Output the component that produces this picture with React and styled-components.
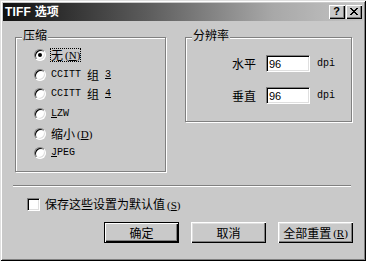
import React from "react";
import styled, { createGlobalStyle } from "styled-components";

const BG = "#c9c9c9";

const Global = createGlobalStyle`
  html, body { margin: 0; padding: 0; background: ${BG}; }
  * { box-sizing: border-box; }
`;

const Window = styled.div`
  width: 366px;
  height: 261px;
  padding: 3px;
  background: ${BG};
  display: flex;
  flex-direction: column;
  font-family: "Noto Sans CJK SC", "Liberation Sans", sans-serif;
  font-size: 12px;
  line-height: 12px;
  color: #000;
  box-shadow: inset 1px 1px 0 #dfdfdf, inset -1px -1px 0 #000,
    inset 2px 2px 0 #fff, inset -2px -2px 0 #808080;
`;

const TitleBar = styled.div`
  height: 18px;
  flex: none;
  display: flex;
  align-items: center;
  justify-content: space-between;
  padding: 0 1px 0 2px;
  background: linear-gradient(90deg, #101010 0%, #5c5c5c 40%, #a8a8a8 75%, #c4c4c4 100%);
`;

const Title = styled.div`
  color: #fff;
  font-weight: bold;
  font-size: 12px;
  line-height: 12px;
  font-family: "Liberation Sans", "Noto Sans CJK SC", sans-serif;
  letter-spacing: 0.2px;
`;

const TitleButtons = styled.div`
  display: flex;
  gap: 1px;
`;

const TitleButton = styled.div`
  width: 16px;
  height: 14px;
  background: ${BG};
  display: flex;
  align-items: center;
  justify-content: center;
  font-family: "Liberation Sans", sans-serif;
  font-weight: bold;
  font-size: 11px;
  line-height: 11px;
  box-shadow: inset 1px 1px 0 #fff, inset -1px -1px 0 #000, inset -2px -2px 0 #808080;
  padding: 0 1px 1px 0;
`;

const Body = styled.div`
  display: flex;
  flex-direction: column;
`;

const GroupsRow = styled.div`
  display: flex;
  align-items: flex-start;
  gap: 19px;
  padding-left: 12px;
  margin-top: 16px;
`;

const Group = styled.div`
  position: relative;
  width: ${(p) => p.$w}px;
  height: ${(p) => p.$h}px;
  border: 1px solid #808080;
  box-shadow: inset 1px 1px 0 #fff, 1px 1px 0 #fff;
`;

const Legend = styled.span`
  position: absolute;
  top: -9px;
  left: 6px;
  padding: 0 1px;
  background: ${BG};
  line-height: 12px;
  font-size: 12px;
`;

const RadioList = styled.div`
  display: flex;
  flex-direction: column;
  padding: 7px 0 0 18px;
`;

const RadioRow = styled.div`
  height: 19.7px;
  display: flex;
  align-items: center;
  gap: 4px;
`;

const RadioDot = styled.span`
  position: relative;
  flex: none;
  width: 12px;
  height: 12px;
  border-radius: 50%;
  background: #fff;
  border: 1px solid;
  border-color: #808080 #fff #fff #808080;
  box-shadow: inset 1px 1px 0 #000, inset -1px -1px 0 #dfdfdf;
  &::after {
    content: "";
    display: ${(p) => (p.$checked ? "block" : "none")};
    position: absolute;
    left: 3px;
    top: 3px;
    width: 4px;
    height: 4px;
    border-radius: 50%;
    background: #000;
  }
`;

const OptionText = styled.span`
  display: inline-flex;
  align-items: center;
  line-height: 12px;
  padding: 1px 1px;
  outline: ${(p) => (p.$focus ? "1px dotted #000" : "none")};
  outline-offset: -1px;
  white-space: pre;
`;

const Mono = styled.span`
  font-family: "Liberation Mono", monospace;
  font-size: 10px;
  line-height: 12px;
  white-space: pre;
`;

const Acc = styled.span`
  font-family: "Liberation Serif", serif;
  font-size: 11px;
  line-height: 12px;
  white-space: pre;
  margin-left: 2px;
`;

const ResGrid = styled.div`
  display: grid;
  grid-template-columns: 24px 44px auto;
  column-gap: 10px;
  row-gap: 15px;
  align-items: center;
  padding: 17px 0 0 46px;
`;

const Unit = styled(Mono)`
  margin-left: -3px;
`;

const NumInput = styled.input`
  width: 44px;
  height: 17px;
  margin: 0;
  padding: 0 2px;
  background: #fff;
  font-family: "Liberation Sans", sans-serif;
  font-size: 11px;
  color: #000;
  border: 1px solid;
  border-color: #808080 #fff #fff #808080;
  box-shadow: inset 1px 1px 0 #000, inset -1px -1px 0 #dfdfdf;
  outline: none;
`;

const Separator = styled.div`
  margin: 13px 12px 0 10px;
  height: 2px;
  border-top: 1px solid #808080;
  border-bottom: 1px solid #fff;
`;

const CheckRow = styled.div`
  display: flex;
  align-items: center;
  gap: 5px;
  margin-top: 11px;
  padding-left: 24px;
  height: 13px;
`;

const CheckBox = styled.span`
  width: 13px;
  height: 13px;
  flex: none;
  background: #fff;
  border: 1px solid;
  border-color: #808080 #fff #fff #808080;
  box-shadow: inset 1px 1px 0 #000, inset -1px -1px 0 #dfdfdf;
`;

const ButtonRow = styled.div`
  display: flex;
  justify-content: flex-end;
  gap: 12px;
  margin-top: 11px;
  padding-right: 10px;
`;

const Button = styled.div`
  width: 75px;
  height: 21px;
  display: flex;
  align-items: center;
  justify-content: center;
  background: ${BG};
  line-height: 12px;
  white-space: pre;
  border: ${(p) => (p.$default ? "1px solid #000" : "none")};
  box-shadow: ${(p) =>
    p.$default
      ? "inset 1px 1px 0 #fff, inset -1px -1px 0 #000, inset -2px -2px 0 #808080"
      : "inset 1px 1px 0 #fff, inset -1px -1px 0 #000, inset -2px -2px 0 #808080, inset 2px 2px 0 #dfdfdf"};
`;

const CloseGlyph = () => (
  <svg width="8" height="7" viewBox="0 0 8 7" shapeRendering="crispEdges">
    <path
      fill="#000"
      d="M0 0h2v1H0zM6 0h2v1H6zM1 1h2v1H1zM5 1h2v1H5zM2 2h4v1H2zM3 3h2v1H3zM2 4h4v1H2zM1 5h2v1H1zM5 5h2v1H5zM0 6h2v1H0zM6 6h2v1H6z"
    />
  </svg>
);

const options = [
  { key: "none", label: <>无<Acc>(<u>N</u>)</Acc></>, checked: true },
  { key: "c3", label: <><Mono>CCITT </Mono>组<Mono> <u>3</u></Mono></> },
  { key: "c4", label: <><Mono>CCITT </Mono>组<Mono> <u>4</u></Mono></> },
  { key: "lzw", label: <Mono><u>L</u>ZW</Mono> },
  { key: "small", label: <>缩小<Acc>(<u>D</u>)</Acc></> },
  { key: "jpeg", label: <Mono><u>J</u>PEG</Mono> },
];

export default function App() {
  return (
    <>
      <Global />
      <Window>
        <TitleBar>
          <Title>TIFF 选项</Title>
          <TitleButtons>
            <TitleButton>?</TitleButton>
            <TitleButton>
              <CloseGlyph />
            </TitleButton>
          </TitleButtons>
        </TitleBar>
        <Body>
          <GroupsRow>
            <Group $w={151} $h={135}>
              <Legend>压缩</Legend>
              <RadioList>
                {options.map((o) => (
                  <RadioRow key={o.key}>
                    <RadioDot $checked={o.checked} />
                    <OptionText $focus={o.checked}>{o.label}</OptionText>
                  </RadioRow>
                ))}
              </RadioList>
            </Group>
            <Group $w={167} $h={85}>
              <Legend>分辨率</Legend>
              <ResGrid>
                <span>水平</span>
                <NumInput readOnly defaultValue="96" />
                <Unit>dpi</Unit>
                <span>垂直</span>
                <NumInput readOnly defaultValue="96" />
                <Unit>dpi</Unit>
              </ResGrid>
            </Group>
          </GroupsRow>
          <Separator />
          <CheckRow>
            <CheckBox />
            <span>
              保存这些设置为默认值<Acc>(<u>S</u>)</Acc>
            </span>
          </CheckRow>
          <ButtonRow>
            <Button $default>确定</Button>
            <Button>取消</Button>
            <Button>
              全部重置<Acc>(<u>R</u>)</Acc>
            </Button>
          </ButtonRow>
        </Body>
      </Window>
    </>
  );
}
